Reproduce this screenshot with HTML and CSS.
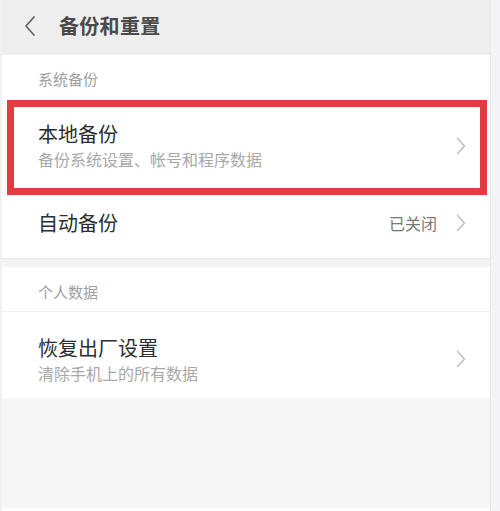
FILE: index.html
```html
<!DOCTYPE html>
<html lang="zh-CN">
<head>
<meta charset="utf-8">
<title>备份和重置</title>
<link rel="stylesheet" href="styles.css">
</head>
<body>
<div class="screen">
  <div class="page">
    <header class="topbar">
      <svg class="back" width="12" height="22" viewBox="0 0 12 22"><polyline points="10,2 2,11 10,20" fill="none" stroke="#666" stroke-width="1.8" stroke-linecap="round" stroke-linejoin="round"/></svg>
      <h1 class="title">备份和重置</h1>
    </header>

    <section class="group">
      <div class="group-label">系统备份</div>
      <div class="row row-tall highlighted">
        <div class="row-text">
          <div class="row-title">本地备份</div>
          <div class="row-sub">备份系统设置、帐号和程序数据</div>
        </div>
        <svg class="chev" width="10" height="18" viewBox="0 0 10 18"><polyline points="1.5,1.5 8.5,9 1.5,16.5" fill="none" stroke="#bdbdbd" stroke-width="1.5" stroke-linecap="round" stroke-linejoin="round"/></svg>
        <div class="mark"></div>
      </div>
      <div class="row row-short">
        <div class="row-text">
          <div class="row-title">自动备份</div>
        </div>
        <span class="row-value">已关闭</span>
        <svg class="chev" width="10" height="18" viewBox="0 0 10 18"><polyline points="1.5,1.5 8.5,9 1.5,16.5" fill="none" stroke="#bdbdbd" stroke-width="1.5" stroke-linecap="round" stroke-linejoin="round"/></svg>
      </div>
    </section>

    <div class="gap"></div>

    <section class="group">
      <div class="group-label label-divided">个人数据</div>
      <div class="row row-reset">
        <div class="row-text">
          <div class="row-title">恢复出厂设置</div>
          <div class="row-sub">清除手机上的所有数据</div>
        </div>
        <svg class="chev" width="10" height="18" viewBox="0 0 10 18"><polyline points="1.5,1.5 8.5,9 1.5,16.5" fill="none" stroke="#bdbdbd" stroke-width="1.5" stroke-linecap="round" stroke-linejoin="round"/></svg>
      </div>
    </section>

    <div class="filler"></div>
  </div>
  <div class="edge"></div>
</div>
</body>
</html>
```

FILE: styles.css
```css
* { box-sizing: border-box; margin: 0; padding: 0; }

html, body {
  width: 500px;
  height: 511px;
  overflow: hidden;
  background: #ffffff;
  font-family: "Noto Sans CJK SC", "Noto Sans", sans-serif;
}

.screen {
  display: flex;
  width: 500px;
  height: 511px;
}

.page {
  width: 490px;
  display: flex;
  flex-direction: column;
  border-left: 2px solid #f1f1f3;
}

.edge {
  width: 10px;
  background: #f4f4f8;
  border-left: 1px solid #e8e8ee;
}

.topbar {
  height: 55px;
  background: #eeeeee;
  display: flex;
  align-items: center;
  padding-left: 22px;
  padding-bottom: 4px;
}

.back { margin-right: 23px; margin-top: 1px; }

.title {
  font-size: 20px;
  font-weight: 700;
  color: #4a4a4a;
  letter-spacing: 0.3px;
  line-height: 1;
}

.group {
  background: #ffffff;
  display: flex;
  flex-direction: column;
}

.group-label {
  height: 47px;
  padding-left: 36px;
  display: flex;
  align-items: center;
  font-size: 15px;
  color: #a0a0a0;
}

.label-divided {
  height: 45px;
  padding-top: 4px;
  border-bottom: 1px solid #f0f0f0;
}

.row {
  position: relative;
  display: flex;
  align-items: center;
  padding-left: 36px;
  padding-right: 24px;
}

.row-tall { height: 88px; }
.row-short { height: 68px; padding-bottom: 2px; }
.row-reset { height: 86px; padding-top: 10px; }

.row-text { flex: 1; display: flex; flex-direction: column; }

.row-title {
  font-size: 20px;
  color: #2e2e2e;
  font-weight: 400;
  line-height: 26px;
}

.row-sub {
  font-size: 16px;
  color: #a8a8a8;
  line-height: 24px;
}

.row-value {
  font-size: 16px;
  color: #777777;
  margin-right: 19px;
}

.row-reset .chev { margin-top: -2px; }

.chev { flex: none; }

.mark {
  position: absolute;
  left: 5px;
  right: 3px;
  top: -2px;
  bottom: -5px;
  border: 7px solid #e63a41;
  pointer-events: none;
}

.gap {
  height: 9px;
  background: #f3f3f3;
  border-top: 1px solid #ececec;
}

.filler {
  flex: 1;
  background: #f6f6f7;
  border-bottom: 3px solid #ffffff;
}
```
